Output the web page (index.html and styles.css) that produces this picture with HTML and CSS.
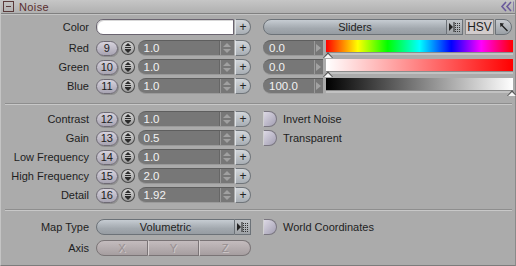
FILE: index.html
```html
<!DOCTYPE html>
<html lang="en">
<head>
    <meta charset="UTF-8">
    <title>Noise</title>
    <link rel="stylesheet" href="styles.css">
</head>
<body>
<div class="panel">
    <div class="header">
        <span class="toggle"></span>
        <span class="title">Noise</span>
        <svg class="collapse" width="14" height="11" viewBox="0 0 14 11">
            <path d="M6 1 L2 5.5 L6 10 M11 1 L7 5.5 L11 10" fill="none" stroke="#6b5a9c" stroke-width="1.6"/>
            <path d="M13.5 0.5 V10.5" stroke="#8a80a8" stroke-width="1"/>
        </svg>
    </div>

    <div class="group first">
        <div class="row">
            <label class="lbl">Color</label>
            <div class="left">
                <div class="swatch"></div>
                <span class="plus">+</span>
            </div>
            <div class="right">
                <div class="popup wide">Sliders</div>
                <span class="menu-btn">
                    <svg width="14" height="12" viewBox="0 0 14 12">
                        <path d="M1 2 L5 6 L1 10 Z" fill="#222"/>
                        <path d="M6 1 V11" stroke="#222"/>
                        <path d="M7 2.5 H13 M7 4.5 H13 M7 6.5 H13 M7 8.5 H13 M7 10.5 H13" stroke="#333" stroke-dasharray="1 1"/>
                    </svg>
                </span>
                <span class="hsv">HSV</span>
                <span class="pick">
                    <svg width="12" height="12" viewBox="0 0 12 12">
                        <path d="M2 2 L6 2.5 L4.6 4 L10 9.5 L9 10.5 L3.6 5 L2.5 6.3 Z" fill="#222"/>
                    </svg>
                </span>
            </div>
        </div>

        <div class="row">
            <label class="lbl">Red</label>
            <div class="left">
                <span class="badge">9</span>
                <span class="env"></span>
                <div class="field"><span class="val">1.0</span><span class="arrows"></span></div>
                <span class="plus">+</span>
            </div>
            <div class="right">
                <div class="field short"><span class="val">0.0</span><span class="slide"></span></div>
                <div class="bar hue"><span class="marker"></span></div>
            </div>
        </div>

        <div class="row">
            <label class="lbl">Green</label>
            <div class="left">
                <span class="badge">10</span>
                <span class="env"></span>
                <div class="field"><span class="val">1.0</span><span class="arrows"></span></div>
                <span class="plus">+</span>
            </div>
            <div class="right">
                <div class="field short"><span class="val">0.0</span><span class="slide"></span></div>
                <div class="bar sat"><span class="marker"></span></div>
            </div>
        </div>

        <div class="row">
            <label class="lbl">Blue</label>
            <div class="left">
                <span class="badge">11</span>
                <span class="env"></span>
                <div class="field"><span class="val">1.0</span><span class="arrows"></span></div>
                <span class="plus">+</span>
            </div>
            <div class="right">
                <div class="field short"><span class="val">100.0</span><span class="slide"></span></div>
                <div class="bar lum"><span class="marker end"></span></div>
            </div>
        </div>
    </div>

    <div class="sep"></div>

    <div class="group second">
        <div class="row">
            <label class="lbl">Contrast</label>
            <div class="left">
                <span class="badge">12</span>
                <span class="env"></span>
                <div class="field"><span class="val">1.0</span><span class="arrows"></span></div>
                <span class="plus">+</span>
            </div>
            <div class="right">
                <span class="check"></span><span class="check-text">Invert Noise</span>
            </div>
        </div>
        <div class="row">
            <label class="lbl">Gain</label>
            <div class="left">
                <span class="badge">13</span>
                <span class="env"></span>
                <div class="field"><span class="val">0.5</span><span class="arrows"></span></div>
                <span class="plus">+</span>
            </div>
            <div class="right">
                <span class="check"></span><span class="check-text">Transparent</span>
            </div>
        </div>
        <div class="row">
            <label class="lbl">Low Frequency</label>
            <div class="left">
                <span class="badge">14</span>
                <span class="env"></span>
                <div class="field"><span class="val">1.0</span><span class="arrows"></span></div>
                <span class="plus">+</span>
            </div>
        </div>
        <div class="row">
            <label class="lbl">High Frequency</label>
            <div class="left">
                <span class="badge">15</span>
                <span class="env"></span>
                <div class="field"><span class="val">2.0</span><span class="arrows"></span></div>
                <span class="plus">+</span>
            </div>
        </div>
        <div class="row">
            <label class="lbl">Detail</label>
            <div class="left">
                <span class="badge">16</span>
                <span class="env"></span>
                <div class="field"><span class="val">1.92</span><span class="arrows"></span></div>
                <span class="plus">+</span>
            </div>
        </div>
    </div>

    <div class="sep"></div>

    <div class="group third">
        <div class="row">
            <label class="lbl">Map Type</label>
            <div class="left">
                <div class="popup map">Volumetric</div>
                <span class="menu-btn">
                    <svg width="14" height="12" viewBox="0 0 14 12">
                        <path d="M1 2 L5 6 L1 10 Z" fill="#222"/>
                        <path d="M6 1 V11" stroke="#222"/>
                        <path d="M7 2.5 H13 M7 4.5 H13 M7 6.5 H13 M7 8.5 H13 M7 10.5 H13" stroke="#333" stroke-dasharray="1 1"/>
                    </svg>
                </span>
            </div>
            <div class="right">
                <span class="check"></span><span class="check-text">World Coordinates</span>
            </div>
        </div>
        <div class="row">
            <label class="lbl">Axis</label>
            <div class="left axis">
                <span class="seg">X</span>
                <span class="seg">Y</span>
                <span class="seg">Z</span>
            </div>
        </div>
    </div>
</div>
</body>
</html>
```

FILE: styles.css
```css
body {
    margin: 0;
    background-color: #ababab;
    font-family: "Liberation Sans", Arial, sans-serif;
    font-size: 11px;
    color: #1e1e1e;
}
.panel {
    width: 516px;
    height: 266px;
    box-sizing: border-box;
    border-left: 1px solid #c4c4c4;
    border-right: 1px solid #8a8a8a;
    border-bottom: 1px solid #7c7c7c;
    background-color: #ababab;
}
.header {
    height: 13px;
    display: flex;
    align-items: center;
    background: linear-gradient(#c6c6c6, #b0b0b0);
    border-bottom: 1px solid #808080;
    box-shadow: 0 1px 0 #c4c4c4;
    padding-left: 2px;
}
.toggle {
    width: 9px;
    height: 9px;
    border: 1px solid #5a3a3a;
    position: relative;
    margin-right: 5px;
}
.toggle::after {
    content: "";
    position: absolute;
    left: 2px;
    right: 2px;
    top: 4px;
    height: 1px;
    background: #5a3a3a;
}
.title {
    color: #5a2e2e;
    font-size: 11px;
    letter-spacing: 0.4px;
}
.collapse {
    margin-left: auto;
    margin-right: 1px;
}

.group.first {
    padding: 5px 0 6px;
}
.group.second {
    padding: 6px 0 3px;
}
.group.third {
    padding: 8px 0 0;
}
.row {
    display: flex;
    align-items: center;
    height: 16px;
    margin-bottom: 3px;
}
.group.first .row:first-child {
    margin-bottom: 5px;
}
.group.third .row:first-child {
    margin-bottom: 5px;
}
.lbl {
    width: 88px;
    text-align: right;
    margin-right: 7px;
    flex-shrink: 0;
}
.left {
    display: flex;
    align-items: center;
    width: 155px;
    height: 16px;
    flex-shrink: 0;
}
.right {
    display: flex;
    align-items: center;
    width: 250px;
    margin-left: 12px;
    height: 16px;
}

.swatch {
    width: 138px;
    height: 14px;
    background: #fff;
    border: 1px solid #6a6470;
    border-radius: 7px 0 0 7px;
    box-shadow: inset 1px 1px 0 #d8d8d8;
}
.plus {
    width: 14px;
    height: 14px;
    margin-left: 1px;
    border: 1px solid #70757a;
    border-left-color: #e0e4e8;
    border-radius: 0 8px 8px 0;
    background: linear-gradient(#d2d6da, #a8aeb4);
    display: flex;
    align-items: center;
    justify-content: center;
    font-size: 12px;
    line-height: 1;
    color: #222;
}
.badge {
    width: 20px;
    height: 13px;
    border: 1px solid #6e6a74;
    border-radius: 8px;
    background: linear-gradient(#d6d2dc, #a8a4b2);
    box-shadow: 1px 1px 0 #8e8e8e;
    text-align: center;
    line-height: 13px;
    color: #202020;
}
.env {
    width: 14px;
    height: 14px;
    margin-left: 3px;
    margin-right: 3px;
    border: 1px solid #4a4a4a;
    border-radius: 50%;
    box-sizing: border-box;
    background:
        linear-gradient(#2a2a2a, #2a2a2a) center 5px / 6px 1px no-repeat,
        linear-gradient(#2a2a2a, #2a2a2a) center 7px / 6px 1px no-repeat,
        linear-gradient(#d8d8d8, #9c9c9c);
    position: relative;
}
.env::before,
.env::after {
    content: "";
    position: absolute;
    left: 3px;
    border-left: 3px solid transparent;
    border-right: 3px solid transparent;
}
.env::before {
    top: 1px;
    border-bottom: 3px solid #2a2a2a;
}
.env::after {
    bottom: 1px;
    border-top: 3px solid #2a2a2a;
}
.field {
    display: flex;
    align-items: center;
    width: 98px;
    height: 16px;
    box-sizing: border-box;
    background: #777;
    border-radius: 8px 0 0 8px;
    border-top: 1px solid #5e5e5e;
    border-bottom: 1px solid #9a9a9a;
    color: #f2f2f2;
    padding-left: 6px;
    font-size: 11.5px;
}
.field .val {
    flex: 1;
    line-height: 14px;
}
.arrows {
    width: 11px;
    height: 14px;
    border-left: 1px solid #9a9a9a;
    box-shadow: -1px 0 0 #666;
    position: relative;
    margin-right: 2px;
}
.arrows::before,
.arrows::after {
    content: "";
    position: absolute;
    left: 2px;
    border-left: 4px solid transparent;
    border-right: 4px solid transparent;
}
.arrows::before {
    top: 2px;
    border-bottom: 4px solid #a0a0a0;
}
.arrows::after {
    bottom: 2px;
    border-top: 4px solid #a0a0a0;
}
.field.short {
    width: 60px;
    margin-right: 3px;
}
.slide {
    width: 7px;
    height: 14px;
    border-left: 1px solid #9a9a9a;
    position: relative;
    margin-right: 1px;
}
.slide::after {
    content: "";
    position: absolute;
    left: 1px;
    top: 3px;
    border-top: 4px solid transparent;
    border-bottom: 4px solid transparent;
    border-left: 5px solid #a2a2a2;
}

.bar {
    position: relative;
    width: 187px;
    height: 12px;
    align-self: flex-start;
    border-bottom: 1px solid #8c8c8c;
    box-shadow: 0 2px 0 #c2c2c2;
}
.bar.hue {
    background: linear-gradient(to right, #f00, #ff0 17%, #0f0 33%, #0ff 50%, #00f 67%, #f0f 83%, #f00);
}
.bar.sat {
    background: linear-gradient(to right, #fff, #f00);
}
.bar.lum {
    background: linear-gradient(to right, #000, #fff);
}
.marker {
    position: absolute;
    left: -3px;
    top: 12px;
    width: 0;
    height: 0;
    border-left: 5px solid transparent;
    border-right: 5px solid transparent;
    border-bottom: 6px solid #555;
}
.marker::after {
    content: "";
    position: absolute;
    left: -4px;
    top: 1.5px;
    border-left: 4px solid transparent;
    border-right: 4px solid transparent;
    border-bottom: 4.5px solid #f4f4f4;
}
.marker.end {
    left: auto;
    right: -4px;
}

.popup {
    height: 16px;
    box-sizing: border-box;
    border: 1px solid #6c7278;
    border-radius: 8px 0 0 8px;
    background: linear-gradient(#c6ccd2, #a2a8ae 60%, #969ca2);
    text-align: center;
    line-height: 14px;
    color: #1e1e1e;
}
.popup.wide {
    width: 184px;
}
.popup.map {
    width: 139px;
}
.menu-btn {
    width: 16px;
    height: 16px;
    box-sizing: border-box;
    border: 1px solid #6c7278;
    border-left: none;
    background: linear-gradient(#c2c6ca, #9ea2a6);
    display: flex;
    align-items: center;
    justify-content: center;
}
.hsv {
    width: 29px;
    height: 16px;
    box-sizing: border-box;
    margin-left: 2px;
    border: 1px solid #8a8a8a;
    border-top-color: #777;
    background: #d2cccc;
    text-align: center;
    line-height: 14px;
    font-size: 12px;
    color: #1e1e1e;
}
.pick {
    width: 17px;
    height: 16px;
    box-sizing: border-box;
    margin-left: 1px;
    border: 1px solid #6c7278;
    border-radius: 0 8px 8px 0;
    background: linear-gradient(#c6cacf, #9aa0a6);
    display: flex;
    align-items: center;
    justify-content: center;
}

.check {
    width: 14px;
    height: 16px;
    box-sizing: border-box;
    border: 1px solid #7a7680;
    border-left-color: #d0d0d0;
    border-radius: 0 8px 8px 0;
    background: linear-gradient(135deg, #dcd8e4, #a29eb2);
    margin-right: 6px;
}
.check-text {
    color: #1e1e1e;
}

.axis .seg {
    flex: 1;
    height: 16px;
    box-sizing: border-box;
    border: 1px solid #7a7476;
    background: linear-gradient(#c4bcbe, #a69ea0);
    text-align: center;
    line-height: 14px;
    color: #968e90;
    text-shadow: 1px 1px 0 #cfc8c9;
}
.axis .seg:first-child {
    border-radius: 8px 0 0 8px;
}
.axis .seg:last-child {
    border-radius: 0 8px 8px 0;
}
.axis .seg + .seg {
    border-left-color: #d8d2d2;
}

.sep {
    height: 0;
    margin: 0 3px 0 4px;
    border-top: 1px solid #8e8e8e;
    border-bottom: 1px solid #c8c8c8;
}
```
